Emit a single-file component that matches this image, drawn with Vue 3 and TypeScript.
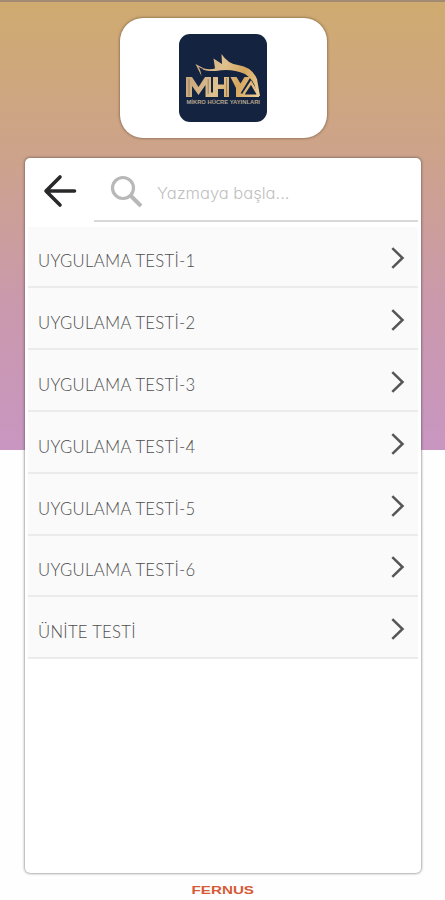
<script setup lang="ts">
import { ref } from 'vue'

const query = ref<string>('')
const tests: string[] = [
  'UYGULAMA TESTİ-1',
  'UYGULAMA TESTİ-2',
  'UYGULAMA TESTİ-3',
  'UYGULAMA TESTİ-4',
  'UYGULAMA TESTİ-5',
  'UYGULAMA TESTİ-6',
  'ÜNİTE TESTİ',
]
</script>

<template>
  <div class="screen">
    <header class="brand-card">
      <svg class="brand" viewBox="0 0 88 88" role="img" aria-label="MHY">
        <defs>
          <linearGradient id="gold" gradientUnits="userSpaceOnUse" x1="7" y1="30" x2="82" y2="60">
            <stop offset="0" stop-color="#c3a078" />
            <stop offset="0.45" stop-color="#dfc18f" />
            <stop offset="0.7" stop-color="#d5a65e" />
            <stop offset="1" stop-color="#efd39c" />
          </linearGradient>
        </defs>
        <rect width="88" height="88" rx="11" fill="#14233f" />
        <path
          d="M16.500 30 L25 34.500 Q31 36 36 34.500 L34.500 24.500 L43 30 L42.500 20 Q49 30 59 31 Q73 33 78 45 L81 62 L78 62 Q77 47 66 40 Q52 34 37 37 Q27 37.500 21 34.500 L22.500 42 Z"
          fill="url(#gold)"
        />
        <path d="M19.500 33 L24 35 L22.300 38 Z" fill="#14233f" />
        <g fill="url(#gold)">
          <path d="M7 43 H13 L19.500 53 L26 43 H32 V58.500 H37 V63 H26.500 V51 L19.500 61 L13 52 V63 H7 Z" />
          <path d="M34 43 H39 V50.500 H45 V43 H50 V63 H45 V55 H39 V63 H34 Z" />
          <path d="M51.500 43 H57.500 L61.500 49.500 L65.500 43 H71.500 L63.500 56 L61.500 59.500 H66 V63 H57 V54 Z" />
        </g>
        <path d="M62 61.700 H80 M64.500 60 L72 48.500 L79 60.500" fill="none" stroke="url(#gold)" stroke-width="2.400" />
        <path d="M10 45 V62 M29.200 45 V60 M47.500 44 V62" stroke="#806a54" stroke-width="0.700" />
        <text x="7.500" y="69.500" textLength="73.500" lengthAdjust="spacingAndGlyphs" class="brand-name">MİKRO HÜCRE YAYINLARI</text>
      </svg>
    </header>

    <main class="panel">
      <div class="toolbar">
        <button class="back" type="button" aria-label="Geri">
          <svg width="34" height="34" viewBox="0 0 34 34">
            <path d="M17 3 L3 17 L17 31 M3.500 17 H31.500" fill="none" stroke="#29292b" stroke-width="3.600" stroke-linecap="round" stroke-linejoin="round" />
          </svg>
        </button>
        <label class="search">
          <svg width="34" height="34" viewBox="0 0 34 34">
            <circle cx="13" cy="13" r="10.500" fill="none" stroke="#b8b8b8" stroke-width="3.200" />
            <path d="M21 21 L31 31" stroke="#b8b8b8" stroke-width="4" />
          </svg>
          <input v-model="query" type="text" placeholder="Yazmaya başla..." />
        </label>
      </div>
      <ul class="list">
        <li v-for="test in tests" :key="test" class="row">
          <span>{{ test }}</span>
          <svg width="16" height="24" viewBox="0 0 16 24">
            <path d="M2.300 2.200 L12.500 12 L2.300 21.800" fill="none" stroke="#565656" stroke-width="2.500" />
          </svg>
        </li>
      </ul>
    </main>

    <footer class="footer">
      <svg width="64" height="12" viewBox="0 0 64 12">
        <text x="0.500" y="10" textLength="62.500" lengthAdjust="spacingAndGlyphs" class="maker">FERNUS</text>
      </svg>
    </footer>
  </div>
</template>

<style>
body {
  margin: 0;
  background: #fff;
}
</style>

<style scoped>
.screen {
  box-sizing: border-box;
  height: 900px;
  overflow: hidden;
  padding-top: 16px;
  border-top: 2px solid #a38a72;
  display: flex;
  flex-direction: column;
  align-items: center;
  background: linear-gradient(#cfab70 0, #cda38a 150px, #ca99ac 300px, #c896c1 448px, #fefefe 448px);
  font-family: Lato, "Liberation Sans", sans-serif;
}
.brand-card {
  box-sizing: border-box;
  width: 207px;
  height: 120px;
  padding-top: 16px;
  margin-left: 1px;
  display: flex;
  justify-content: center;
  border-radius: 23px;
  background: #fff;
  box-shadow: 0 0 3px rgba(70, 45, 30, 0.75);
}
.brand {
  width: 88px;
  height: 88px;
}
.brand-name {
  font: 700 5.6px "Liberation Sans", sans-serif;
  fill: #b7a58e;
}
.panel {
  box-sizing: border-box;
  width: 396px;
  height: 715px;
  margin-top: 20px;
  margin-left: 1px;
  padding: 0 3px;
  border-radius: 5px;
  background: #fff;
  box-shadow: 0 0 3px rgba(55, 45, 50, 0.8);
}
.toolbar {
  display: flex;
  height: 68.6px;
}
.back {
  display: flex;
  width: 66px;
  height: 64px;
  padding: 16px 0 0 15px;
  box-sizing: border-box;
  border: 0;
  background: none;
}
.search {
  box-sizing: border-box;
  flex: 1;
  height: 64px;
  padding: 17px 0 0 16px;
  display: flex;
  gap: 13px;
  border-bottom: 2px solid #d8d8d8;
}
.search input {
  width: 220px;
  height: 36px;
  padding: 0;
  border: 0;
  outline: 0;
  background: none;
  font: 300 16.5px Inter, Lato, sans-serif;
  font-feature-settings: "cv11";
  color: #666;
}
.search input::placeholder {
  color: #c0c0c0;
  opacity: 1;
}
.list {
  margin: 0;
  padding: 0;
  list-style: none;
}
.row {
  box-sizing: border-box;
  height: 61.8px;
  padding: 4px 12px 0 10px;
  display: flex;
  align-items: center;
  justify-content: space-between;
  border-bottom: 2px solid #ebebeb;
  background: #fafafa;
  font-size: 16.7px;
  font-weight: 300;
  letter-spacing: 0.28px;
  line-height: 20px;
  color: #4e4e4e;
}
.row span {
  padding-top: 6px;
}
.footer {
  margin-top: 11px;
  height: 12px;
  display: flex;
}
.maker {
  font: 700 11.5px "Liberation Sans", sans-serif;
  fill: #d65a38;
}
</style>
